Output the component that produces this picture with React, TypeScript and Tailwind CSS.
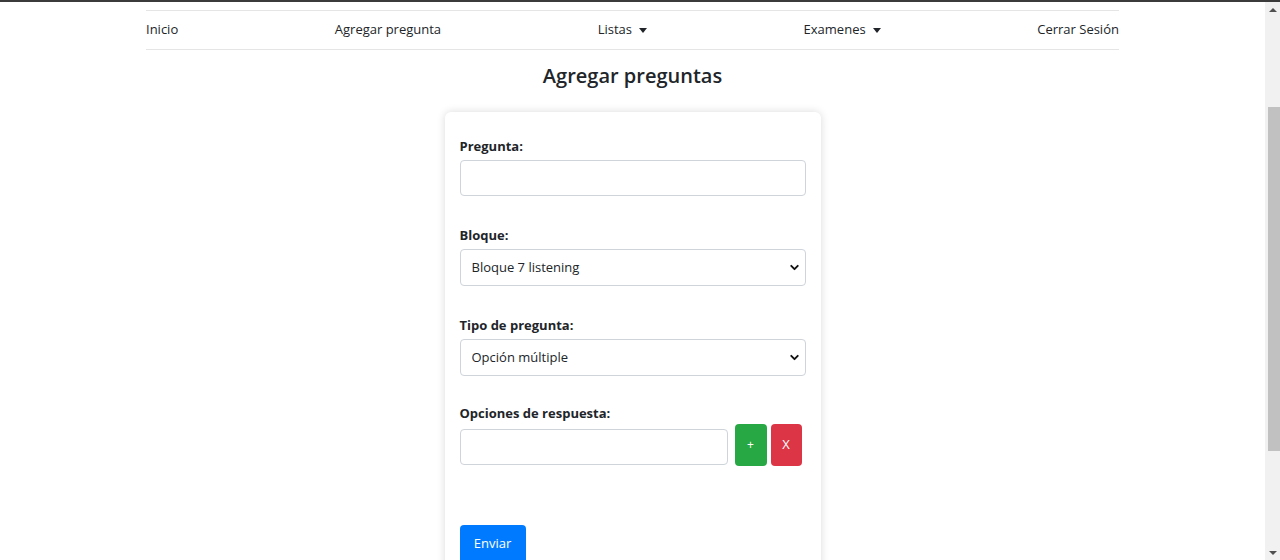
import { ChevronDown } from "lucide-react";

const navItems = [
  { label: "Inicio" },
  { label: "Agregar pregunta" },
  { label: "Listas", caret: true },
  { label: "Examenes", caret: true },
  { label: "Cerrar Sesión" },
];

function Caret() {
  return <span className="ml-[7px] inline-block border-x-[4px] border-t-[5px] border-x-transparent border-t-[#212529] align-middle" />;
}

function Select({ value }: { value: string }) {
  return (
    <div className="flex h-[37px] items-center justify-between rounded-[4px] border border-[#ced4da] bg-white pl-[11px] pr-[4px] text-[13px] text-[#212529]">
      <span>{value}</span>
      <ChevronDown size={13} strokeWidth={3.5} className="text-[#111]" />
    </div>
  );
}

function Label({ children, tight }: { children: string; tight?: boolean }) {
  return (
    <p className={`${tight ? "mb-[2px]" : "mb-[5px]"} text-[13px] font-bold leading-[18px] text-[#212529]`}>
      {children}
    </p>
  );
}

export default function App() {
  return (
    <div className="flex h-[560px] flex-col overflow-hidden bg-white" style={{ fontFamily: '"Open Sans", "Noto Sans", sans-serif' }}>
      <div className="h-[2px] bg-[#3b3b3b]" />
      <div className="flex min-h-0 flex-1">
        {/* page */}
        <div className="min-w-0 flex-1">
          <div className="mx-auto w-[973px]">
            <nav className="mt-[8px] flex h-[40px] items-center justify-between border-y border-[#e5e5e5] text-[13px] text-[#212529]">
              {navItems.map((item) => (
                <span key={item.label} className="flex items-center">
                  {item.label}
                  {item.caret && <Caret />}
                </span>
              ))}
            </nav>

            <h3 className="mt-[13px] text-center text-[20px] font-semibold leading-[26px] text-[#212529]">Agregar preguntas</h3>

            <div className="mx-auto mt-[23px] w-[376px] rounded-[6px] bg-white px-[15px] pt-[25px] pb-[20px] shadow-[0_0_8px_rgba(0,0,0,0.15)]">
              <Label>Pregunta:</Label>
              <div className="h-[36px] rounded-[4px] border border-[#ced4da]" />

              <div className="mt-[30px]">
                <Label>Bloque:</Label>
                <Select value="Bloque 7 listening" />
              </div>

              <div className="mt-[30px]">
                <Label>Tipo de pregunta:</Label>
                <Select value="Opción múltiple" />
              </div>

              <div className="mt-[28px]">
                <Label tight>Opciones de respuesta:</Label>
                <div className="flex items-start">
                  <div className="mt-[5px] h-[36px] w-[268px] rounded-[4px] border border-[#ced4da]" />
                  <button className="ml-[7px] flex h-[42px] w-[32px] items-center justify-center rounded-[4px] bg-[#28a745] text-[12px] text-white">+</button>
                  <button className="ml-[4px] flex h-[42px] w-[31px] items-center justify-center rounded-[4px] bg-[#dc3545] text-[13px] text-white">X</button>
                </div>
              </div>

              <button className="mt-[59px] h-[38px] w-[66px] rounded-[4px] bg-[#007bff] text-[13px] text-white">Enviar</button>
            </div>
          </div>
        </div>

        {/* scrollbar */}
        <div className="flex w-[15px] flex-col items-center bg-[#f1f1f1]">
          <span className="mt-[6px] border-x-[4px] border-b-[4px] border-x-transparent border-b-[#505050]" />
          <div className="mt-[95px] h-[344px] w-[12px] self-end bg-[#c1c1c1]" />
          <div className="flex-1" />
          <span className="mb-[5px] border-x-[4px] border-t-[4px] border-x-transparent border-t-[#505050]" />
        </div>
      </div>
    </div>
  );
}
